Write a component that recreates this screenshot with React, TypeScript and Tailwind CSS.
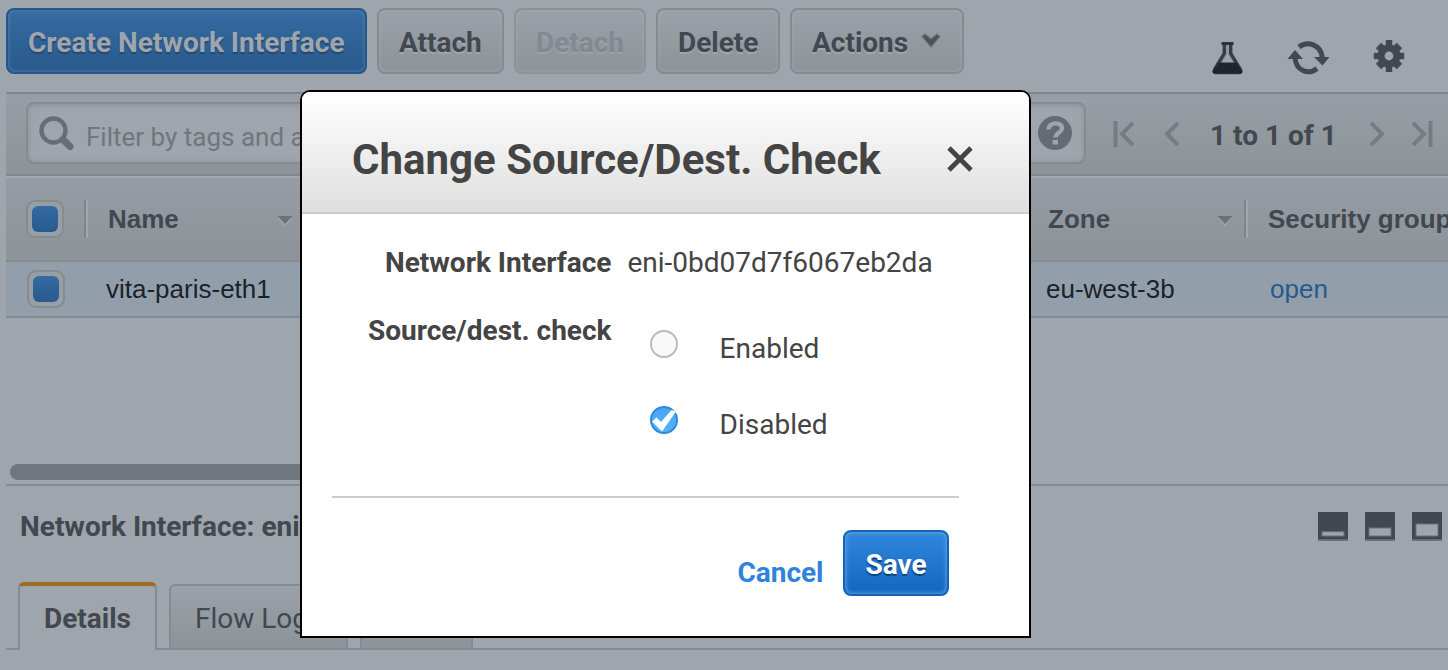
import React from "react";

const raised =
  "flex shrink-0 items-center rounded-[8px] border-2 bg-linear-to-b from-[#9aa1a8] to-[#8c9399] pt-[4px] text-[28px] leading-none font-bold shadow-[inset_0_0_4px_rgba(165,172,179,0.8)]";

function ToolButton({ className, children }: { className: string; children: React.ReactNode }) {
  return <button className={`${raised} ${className}`}>{children}</button>;
}

function Checkbox({ className }: { className: string }) {
  return (
    <div className={`flex size-[38px] shrink-0 items-center justify-center rounded-[9px] border-2 border-[#848b91] bg-[#979ea4] ${className}`}>
      <div className="size-[26px] rounded-[6px] bg-linear-to-b from-[#356ba2] to-[#285a8d]" />
    </div>
  );
}

function Caret() {
  return (
    <svg className="mt-[3px] shrink-0" width="16" height="10" viewBox="0 0 16 10">
      <path d="M1 2h14L8 10z" fill="#a0a7ae" />
      <path d="M.5 0h15L8 8z" fill="#6b7278" />
    </svg>
  );
}

function Separator({ className }: { className: string }) {
  return <div className={`h-[38px] w-[4px] shrink-0 border-l-2 border-[#7f868d] bg-[#a0a7ae] ${className}`} />;
}

function PaneIcon({ y, h }: { y: number; h: number }) {
  return (
    <svg width="30" height="29" viewBox="0 0 30 29">
      <path d="M0 0h30v29H0z" fill="#6b7279" />
      <path d="M0 0h30v27.200H0z" fill="#41484f" />
      <rect x="4" y={y} width="22" height={h} fill="#9ea5ac" stroke="#6b7279" strokeWidth="1" />
    </svg>
  );
}

function Toolbar() {
  return (
    <div className="flex h-[92px] shrink-0 items-start pt-2 pl-1.5">
      <button className="flex h-[66px] w-[361px] shrink-0 items-center rounded-[8px] border-2 border-[#24588d] bg-linear-to-b from-[#376ba1] to-[#27598c] pt-[4px] pl-[20px] text-[28px] leading-none font-bold text-[#9ea5ac] shadow-[inset_0_0_4px_#5d83a8] [text-shadow:0_2px_1px_#25476e]">
        Create Network Interface
      </button>
      <ToolButton className="ml-[10px] h-[66px] w-[127px] border-[#848b91] pl-[20px] text-[#41484f] [text-shadow:0_2px_0_#a0a7ae]">Attach</ToolButton>
      <ToolButton className="ml-[10px] h-[66px] w-[132px] border-[#8c9399] pl-[20px] text-[#828990] [text-shadow:0_2px_0_#9ba2a9]">Detach</ToolButton>
      <ToolButton className="ml-[10px] h-[66px] w-[124px] border-[#848b91] pl-[20px] text-[#41484f] [text-shadow:0_2px_0_#a0a7ae]">Delete</ToolButton>
      <ToolButton className="ml-[10px] h-[66px] w-[174px] border-[#848b91] pl-[20px] text-[#41484f] [text-shadow:0_2px_0_#a0a7ae]">
        Actions
        <svg className="mb-[6px] ml-[13px]" width="20" height="15" viewBox="0 0 20 15">
          <path d="M1 3.500 4 1l6 5 6-5 3 2.500L10 14z" fill="#4b5258" stroke="#6d747b" strokeWidth="1.200" />
        </svg>
      </ToolButton>
      <svg className="mt-[33px] ml-[248px]" width="32" height="34" viewBox="0 0 32 34">
        <path d="M12.300 2v10.500L2.500 28.500Q2 31.500 3.500 31.500h24q1.500 0 1-3L18.700 12.500V2" fill="#8f969d" stroke="#363d44" strokeWidth="3.400" />
        <path d="m15.500 13 5 9h-10z" fill="#9ea5ac" />
        <path d="M9.500 2.500h12" stroke="#2b3239" strokeWidth="3" />
        <path d="M6.500 21.500h18l6 9q0 2-1.500 2H2Q.5 32.500.5 30.500z" fill="#1e252c" />
      </svg>
      <svg className="mt-[33px] ml-[43px]" width="43" height="36" viewBox="0 0 43 36" fill="none" stroke="#41484f" strokeWidth="5">
        <path d="M12 6C20-.5 34 3 35.500 17" />
        <path d="M30 27.500C22 34 8.500 30.500 8 16" />
        <path d="M27 16h15.500L35.500 24.500z" fill="#41484f" stroke="none" />
        <path d="M.5 18h15.500L8 9z" fill="#41484f" stroke="none" />
      </svg>
      <svg className="mt-[31px] ml-[43px]" width="32" height="34" viewBox="-16 -17 32 34">
        <g fill="#41484f">
          <circle r="11.500" />
          <path d="M-3.200-16h6.400v32h-6.400z" />
          <path d="M-3.200-15.200h6.400v30.400h-6.400z" transform="rotate(90)" />
          <path d="M-3.800-14.800h7.600v29.600h-7.600z" transform="rotate(45)" />
          <path d="M-3.800-14.800h7.600v29.600h-7.600z" transform="rotate(-45)" />
        </g>
        <circle r="4.400" fill="#9ea5ac" />
      </svg>
    </div>
  );
}

function FilterBar() {
  return (
    <div className="ml-1.5 flex h-[84px] shrink-0 items-start border-y-2 border-[#7f868d] bg-linear-to-b from-[#979ea5] to-[#8c9399] pt-2 pl-5">
      <div className="flex h-[62px] w-[1060px] shrink-0 items-center rounded-[8px] border-2 border-[#848b91] bg-[#9ea5ac] shadow-[inset_0_1px_5px_rgba(120,127,134,0.6)]">
        <svg className="ml-[10px] shrink-0" width="37" height="37" viewBox="0 0 37 37" fill="none" stroke="#666d74">
          <circle cx="15.500" cy="15.500" r="12" strokeWidth="4.400" />
          <path d="m25 24.500 7 7" strokeWidth="7" strokeLinecap="round" />
        </svg>
        <div className="mt-[8px] ml-[11px] w-[260px] shrink-0 overflow-hidden text-[26px] leading-[34px] whitespace-nowrap text-[#6f767d]">
          Filter by tags and attributes or search by keyword
        </div>
        <svg className="mb-[1px] ml-[692px] shrink-0" width="34" height="34" viewBox="0 0 34 34">
          <circle cx="17" cy="17" r="17" fill="#646b72" />
          <path d="M10.500 13.500c0-8 13.500-8 13.500-1.500 0 5-6.500 4.500-6.500 9.500" fill="none" stroke="#9ea5ac" strokeWidth="4.200" />
          <path d="M14.500 24h5.500v4.500h-5.500z" fill="#9ea5ac" />
        </svg>
      </div>
      <div className="mt-[19px] ml-[27px] flex h-[26px] items-center">
        <svg width="21" height="26" viewBox="0 0 21 26" fill="none" stroke="#757c83">
          <path d="M2.500 0v26" strokeWidth="4" />
          <path d="M20 2 9 13l11 11" strokeWidth="4" />
        </svg>
        <svg className="ml-[30px]" width="15" height="26" viewBox="0 0 15 26" fill="none" stroke="#757c83" strokeWidth="4">
          <path d="M14 2 3 13l11 11" />
        </svg>
        <div className="mt-[3px] ml-[31px] w-[126px] text-[28px] leading-none font-bold whitespace-nowrap text-[#41484f]">1 to 1 of 1</div>
        <svg className="ml-[34px]" width="15" height="26" viewBox="0 0 15 26" fill="none" stroke="#757c83" strokeWidth="4">
          <path d="m1 2 11 11L1 24" />
        </svg>
        <svg className="ml-[27px]" width="21" height="26" viewBox="0 0 21 26" fill="none" stroke="#757c83">
          <path d="M18.500 0v26" strokeWidth="4" />
          <path d="m1 2 11 11L1 24" strokeWidth="4" />
        </svg>
      </div>
    </div>
  );
}

function Table() {
  return (
    <div className="ml-1.5 h-[288px] shrink-0 font-['Liberation_Sans',Arial,sans-serif] text-[26px] leading-none whitespace-nowrap">
      <div className="flex h-[86px] items-center border-t-2 border-b-2 border-t-[#a0a7ae] border-b-[#848b91] bg-linear-to-b from-[#959ca3] to-[#8c9399] font-bold text-[#41484f]">
        <Checkbox className="ml-[20px]" />
        <Separator className="ml-[20px]" />
        <div className="ml-[20px] w-[169px] shrink-0">Name</div>
        <Caret />
        <div className="ml-[755px] w-[169px] shrink-0">Zone</div>
        <Caret />
        <Separator className="ml-[11px]" />
        <div className="ml-[20px] shrink-0">Security groups</div>
      </div>
      <div className="flex h-[56px] items-center border-b-2 border-[#848b91] bg-[#929fab] text-[#1b2229]">
        <Checkbox className="ml-[21px]" />
        <div className="ml-[41px] w-[940px]">vita-paris-eth1</div>
        <div className="w-[224px]">eu-west-3b</div>
        <div className="text-[#28598d]">open</div>
      </div>
      <div className="h-[146px] pt-[146px] pl-1">
        <div className="h-[16px] w-[900px] rounded-full bg-[#70777e]" />
      </div>
    </div>
  );
}

function Details() {
  return (
    <div className="flex h-[206px] shrink-0 flex-col">
      <div className="mt-[20px] ml-1.5 h-[2px] shrink-0 bg-[#848b91]" />
      <div className="flex h-[96px] shrink-0 items-start pl-[20px]">
        <h2 className="mt-[27px] w-[1298px] text-[28px] leading-none font-bold text-[#41484f]">Network Interface: eni-0bd07d7f6067eb2da</h2>
        <div className="mt-[26px] flex gap-[17px]">
          <PaneIcon y={19.7} h={4.3} />
          <PaneIcon y={16} h={8} />
          <PaneIcon y={12} h={12} />
        </div>
      </div>
      <div className="ml-1.5 flex h-[68px] shrink-0 items-end text-[28px] leading-none text-[#41484f]">
        <div className="h-[2px] w-[12px] bg-[#848b91]" />
        <div className="h-[68px] w-[139px] overflow-hidden rounded-t-[6px] border-x-2 border-t-4 border-x-[#848b91] border-t-[#9c6b24] pt-[19px] pl-[24px] font-bold">Details</div>
        <div className="h-[2px] w-[12px] bg-[#848b91]" />
        <div className="h-[66px] w-[179px] rounded-t-[6px] border-2 border-[#848b91] bg-linear-to-b from-[#9aa1a8] to-[#8c9399] pt-[19px] pl-[24px]">Flow Logs</div>
        <div className="h-[2px] w-[12px] bg-[#848b91]" />
        <div className="h-[66px] w-[113px] rounded-t-[6px] border-2 border-[#848b91] bg-linear-to-b from-[#9aa1a8] to-[#8c9399] pt-[19px] pl-[24px]">Tags</div>
        <div className="h-[2px] flex-1 bg-[#848b91]" />
      </div>
    </div>
  );
}

function Radio({ checked }: { checked?: boolean }) {
  return checked ? (
    <svg width="28" height="28" viewBox="0 0 28 28">
      <defs>
        <linearGradient id="blue" x1="0" y1="0" x2="0" y2="1">
          <stop offset="0" stopColor="#4aa6f4" />
          <stop offset="1" stopColor="#55b3f8" />
        </linearGradient>
      </defs>
      <circle cx="14" cy="14.600" r="13.200" fill="#b9b9b9" />
      <circle cx="14" cy="14" r="13" fill="url(#blue)" stroke="#2d8be0" strokeWidth="2" />
      <path d="m2 15.500 4.500-4L11 16 21.500 4l4.500 1.500L12 25.500z" fill="#fff" />
    </svg>
  ) : (
    <svg width="28" height="28" viewBox="0 0 28 28">
      <circle cx="14" cy="15" r="13" fill="#d8d8d8" />
      <circle cx="14" cy="14" r="13" fill="#f9f9f9" stroke="#bbb" strokeWidth="2" />
    </svg>
  );
}

function Dialog() {
  return (
    <div className="absolute top-[90px] left-[300px] flex h-[548px] w-[731px] flex-col overflow-hidden rounded-t-[10px] border-2 border-black bg-white text-[28px] leading-none text-[#444]">
      <div className="flex h-[122px] shrink-0 items-center border-b-2 border-[#ccc] bg-linear-to-b from-white to-[#dfdfdf] pt-[16px] pl-[50px]">
        <h1 className="w-[594px] text-[42px] leading-none font-bold whitespace-nowrap">Change Source/Dest. Check</h1>
        <svg className="mb-[2px]" width="28" height="28" viewBox="0 0 28 28">
          <path d="m3 3 22 22M25 3 3 25" stroke="#444" strokeWidth="4.800" />
        </svg>
      </div>
      <div className="flex h-[282px] shrink-0 flex-col whitespace-nowrap">
        <div className="mt-[35px] flex">
          <div className="w-[309.5px] text-right font-bold">Network Interface</div>
          <div className="ml-[16px]">eni-0bd07d7f6067eb2da</div>
        </div>
        <div className="mt-[40px] flex">
          <div className="w-[309.5px] text-right font-bold">Source/dest. check</div>
          <div className="ml-[38.5px] flex flex-col gap-[48px] pt-[13px]">
            <div className="flex h-[28px] items-start gap-[41.6px]">
              <Radio />
              <span className="pt-[5px]">Enabled</span>
            </div>
            <div className="flex h-[28px] items-start gap-[41.6px]">
              <Radio checked />
              <span className="pt-[5px]">Disabled</span>
            </div>
          </div>
        </div>
      </div>
      <div className="mr-[70px] ml-[30px] flex h-[102px] shrink-0 items-start justify-end border-t-2 border-[#ccc] pt-[32px] pr-[10px]">
        <button className="mt-[29px] mr-[19.5px] font-bold text-[#2e83dc]">Cancel</button>
        <button className="flex h-[66px] w-[106px] items-center justify-center rounded-[8px] border-2 border-[#1166bb] bg-linear-to-b from-[#3086de] to-[#1267bf] pt-[4px] font-bold text-white shadow-[inset_0_0_5px_#7aaee5] [text-shadow:0_2px_1px_#0c447e]">Save</button>
      </div>
    </div>
  );
}

export default function App() {
  return (
    <div className="relative flex h-[670px] w-[1448px] flex-col overflow-hidden bg-[#9ea5ac] font-['Roboto',sans-serif]">
      <Toolbar />
      <FilterBar />
      <Table />
      <Details />
      <Dialog />
    </div>
  );
}
